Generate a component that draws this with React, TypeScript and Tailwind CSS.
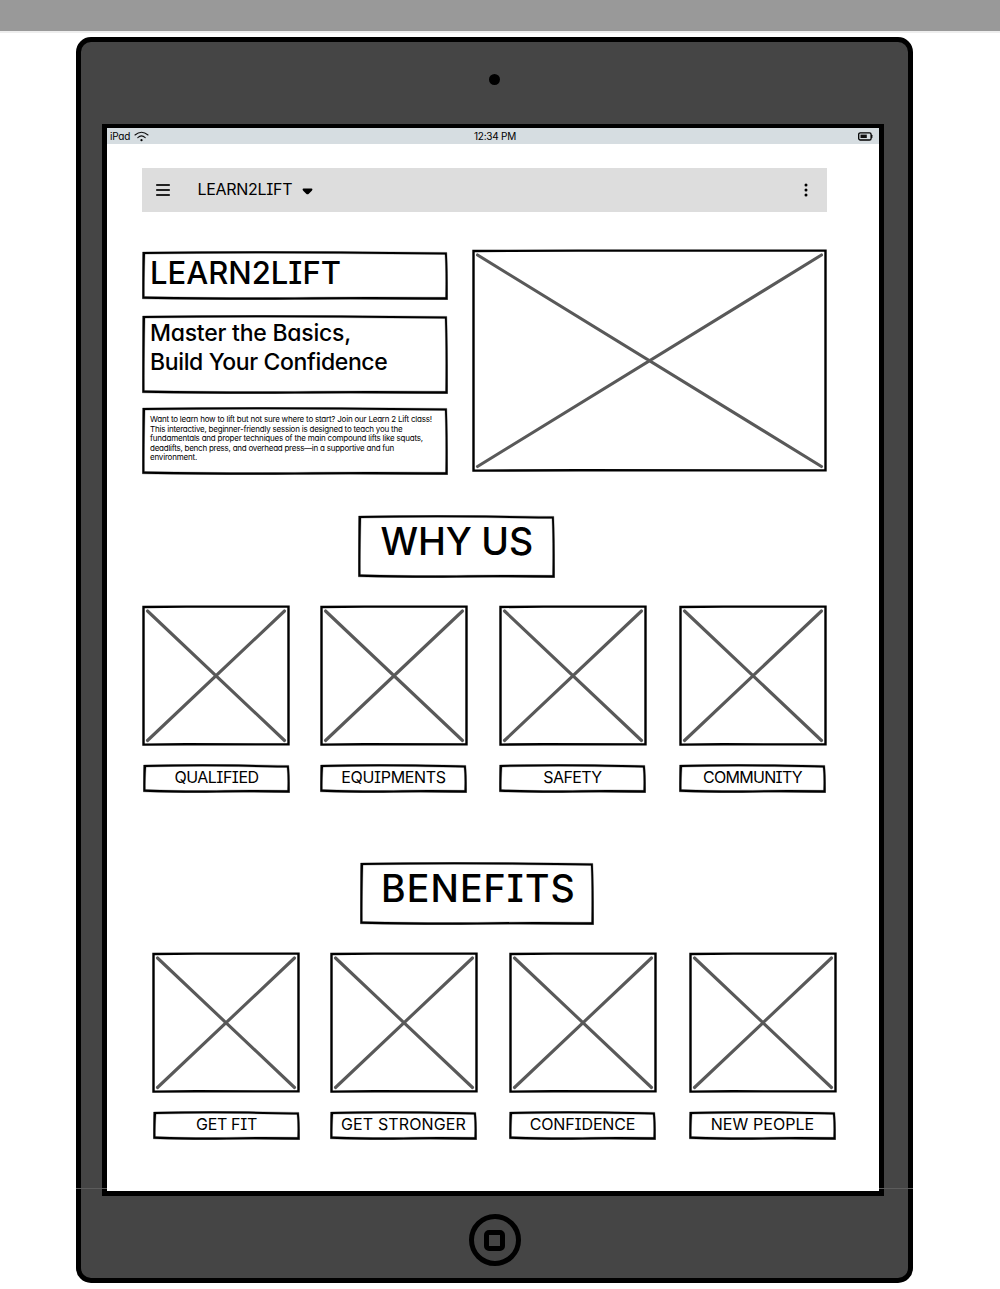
import type { ReactNode } from "react";

/** Rectangle with slightly uneven, hand-drawn edges. */
function SketchFrame({ w, h, className = "", children }: { w: number; h: number; className?: string; children: ReactNode }) {
  const outer = `M0.6,1 Q${w * 0.35},-0.2 ${w * 0.65},0.6 T${w - 1.2},1.4 Q${w - 0.2},${h * 0.4} ${w - 0.3},${h - 0.2} Q${w * 0.7},${h - 1.2} ${w * 0.5},${h - 0.5} T0.3,${h - 1.2} Q0.2,${h * 0.6} 0.6,1 Z`;
  const inner = `M3,3 Q${w * 0.35},1.8 ${w * 0.65},2.6 T${w - 3},3.4 Q${w - 2},${h * 0.4} ${w - 2.5},${h - 2.7} Q${w * 0.7},${h - 3.2} ${w * 0.5},${h - 2.6} T2.4,${h - 3.4} Q2.2,${h * 0.6} 3,3 Z`;
  return (
    <div className={`relative ${className}`}>
      <svg className="absolute inset-0 size-full" viewBox={`0 0 ${w} ${h}`} preserveAspectRatio="none">
        <path d={`${outer} ${inner}`} fillRule="evenodd" fill="#000" stroke="#000" strokeWidth="0.3" strokeLinejoin="round" />
      </svg>
      <div className="relative">{children}</div>
    </div>
  );
}

function ImagePlaceholder({ w, h }: { w: number; h: number }) {
  return (
    <svg width={w} height={h} viewBox={`0 0 ${w} ${h}`} className="block shrink-0">
      <path
        d={`M1.5,2 L${w * 0.3},1.6 L${w - 1.5},1.6 V${h - 1.6} L${w * 0.3},${h - 1.7} L1.5,${h - 1.4} Z`}
        fill="none"
        stroke="#000"
        strokeWidth="2.4"
      />
      <path
        d={`M5.5,6 L${w - 5.5},${h - 5.5} M${w - 5.5},6 L5.5,${h - 5.5}`}
        stroke="#595959"
        strokeWidth="3.1"
        strokeLinecap="round"
      />
    </svg>
  );
}

type Item = { label: string; tracking: string };

const whyUs: Item[] = [
  { label: "QUALIFIED", tracking: "tracking-[-0.5px]" },
  { label: "EQUIPMENTS", tracking: "tracking-[-0.32px]" },
  { label: "SAFETY", tracking: "tracking-[-0.6px]" },
  { label: "COMMUNITY", tracking: "tracking-[-0.7px]" },
];

const benefits: Item[] = [
  { label: "GET FIT", tracking: "tracking-[-0.35px]" },
  { label: "GET STRONGER", tracking: "tracking-[0.12px]" },
  { label: "CONFIDENCE", tracking: "tracking-[-0.13px]" },
  { label: "NEW PEOPLE", tracking: "tracking-[0.06px]" },
];

function CardRow({ items }: { items: Item[] }) {
  return (
    <div className="mt-[27px] grid grid-cols-[178px_179px_180px_148px]">
      {items.map((item, i) => (
        <div key={item.label} className="flex w-[148px] flex-col gap-[18px]">
          <ImagePlaceholder w={148} h={141} />
          <SketchFrame w={147} h={29} className={i === 0 ? "ml-px h-[29px] w-[147px]" : "h-[29px] w-[147px]"}>
            <div className={`text-center text-[16px] leading-[27px] whitespace-nowrap ${item.tracking}`}>{item.label}</div>
          </SketchFrame>
        </div>
      ))}
    </div>
  );
}

function StatusBar() {
  return (
    <div className="flex h-4 items-center justify-between bg-[#d6dde1] pr-[6px] pl-[3px] text-[10px] leading-4">
      <div className="mt-[-1px] flex w-10 items-center gap-1">
        <span className="tracking-[-0.25px]">iPad</span>
        <svg width="15" height="11" viewBox="0 0 15 11" fill="none" stroke="#111" strokeWidth="1.1" strokeLinecap="round" className="mt-[2px] shrink-0">
          <path d="M1,4 Q7.5,-1.6 14,4" />
          <path d="M3.8,6.6 Q7.5,3.2 11.2,6.6" />
          <circle cx="7.5" cy="9.2" r="1.1" fill="#000" stroke="none" />
        </svg>
      </div>
      <span className="mt-[-1px] ml-[-18px] tracking-[-0.25px]">12:34 PM</span>
      <svg width="15" height="9" viewBox="0 0 15 9" className="block">
        <rect x="0.7" y="0.8" width="12.4" height="7.2" rx="1.6" fill="none" stroke="#000" strokeWidth="1.3" />
        <rect x="2.5" y="2.6" width="6.3" height="3.4" fill="#111" />
        <rect x="13.3" y="2.8" width="1.1" height="3.2" rx="0.5" fill="#000" />
      </svg>
    </div>
  );
}

function AppBar() {
  return (
    <div className="flex h-11 items-center bg-[#ddd] pr-[18px] pl-[14px]">
      <svg width="14" height="14" viewBox="0 0 14 14" stroke="#222" strokeWidth="1.8" strokeLinecap="round">
        <path d="M0.8,2 H13.2 M0.8,7 H13.2 M0.8,12 H13.2" />
      </svg>
      <span className="mt-[-2px] ml-[27.5px] text-[16px] leading-6 tracking-[-0.3px]">LEARN2LIFT</span>
      <svg width="11" height="7" viewBox="0 0 11 7" className="mt-[3px] ml-[9.5px]">
        <path d="M1.5,0.6 H9.5 Q11.2,1 9.8,2.8 L6.8,5.8 Q5.5,6.8 4.2,5.8 L1.2,2.8 Q-0.2,1 1.5,0.6 Z" fill="#000" />
      </svg>
      <svg width="6" height="16" viewBox="0 0 6 16" className="ml-auto">
        <circle cx="3" cy="3" r="1.5" />
        <circle cx="3" cy="8" r="1.5" />
        <circle cx="3" cy="13" r="1.5" />
      </svg>
    </div>
  );
}

function Hero() {
  return (
    <div className="mt-[37px] flex gap-6">
      <div className="flex w-[306px] flex-col pt-[2px] whitespace-nowrap">
        <SketchFrame w={306} h={49} className="h-[49px]">
          <h1 className="pt-[6px] pl-[8px] text-[31px] leading-8 font-medium">LEARN2LIFT</h1>
        </SketchFrame>
        <SketchFrame w={306} h={79} className="mt-[15px] h-[79px]">
          <h2 className="pt-[4px] pl-[8px] text-[23px] leading-[29px] font-medium">
            <span className="block tracking-[-0.24px]">Master the Basics,</span>
            <span className="block tracking-[-0.37px]">Build Your Confidence</span>
          </h2>
        </SketchFrame>
        <SketchFrame w={306} h={68} className="mt-[13px] h-[68px]">
          <p className="pt-[8px] pl-[8px] text-[8px] leading-[9.5px]">
            <span className="block tracking-[-0.215px]">Want to learn how to lift but not sure where to start? Join our Learn 2 Lift class!</span>
            <span className="block tracking-[-0.225px]">This interactive, beginner-friendly session is designed to teach you the</span>
            <span className="block tracking-[-0.215px]">fundamentals and proper techniques of the main compound lifts like squats,</span>
            <span className="block tracking-[-0.245px]">deadlifts, bench press, and overhead press—in a supportive and fun</span>
            <span className="block tracking-[-0.2px]">environment.</span>
          </p>
        </SketchFrame>
      </div>
      <ImagePlaceholder w={355} h={223} />
    </div>
  );
}

export default function App() {
  return (
    <div className="h-[1289px] w-[1000px] overflow-hidden bg-white font-['Inter',sans-serif] text-black [font-feature-settings:'cv08','cv11']">
      <div className="h-[33px] border-b-2 border-[#eee] bg-[#999]" />
      <div className="relative mt-[4px] ml-[76px] flex h-[1246px] w-[837px] flex-col items-center rounded-[15px] border-[5px] border-black bg-[#454545]">
        <div className="mt-[32px] size-[11px] shrink-0 rounded-full bg-black" />
        <main className="mt-[39px] mr-[3px] h-[1072px] w-[782px] shrink-0 border-x-[5px] border-t-4 border-b-[5px] border-black bg-white">
          <StatusBar />
          <div className="ml-[35px] w-[685px] pt-6">
            <AppBar />
            <Hero />
            <SketchFrame w={197} h={63} className="mt-10 ml-[216px] h-[63px] w-[197px]">
              <h2 className="pt-[7px] pl-[22.5px] text-[37.5px] leading-10 font-medium tracking-[-0.2px] whitespace-nowrap">WHY US</h2>
            </SketchFrame>
            <CardRow items={whyUs} />
            <SketchFrame w={234} h={63} className="mt-[69px] ml-[218px] h-[63px] w-[234px]">
              <h2 className="pt-[7px] pl-[21px] text-[37.5px] leading-10 font-medium tracking-[1.1px] whitespace-nowrap">BENEFITS</h2>
            </SketchFrame>
            <div className="ml-[10px]">
              <CardRow items={benefits} />
            </div>
          </div>
        </main>
        <div className="mt-[18px] flex size-[52px] shrink-0 items-center justify-center rounded-full border-[5px] border-black">
          <div className="size-[21px] rounded-[5px] border-[5px] border-black" />
        </div>
        <div className="absolute top-[1146px] left-[-5px] h-px w-[31px] bg-[#5c5c5c]" />
        <div className="absolute top-[1146px] right-[-5px] h-px w-[34px] bg-[#5c5c5c]" />
      </div>
    </div>
  );
}
